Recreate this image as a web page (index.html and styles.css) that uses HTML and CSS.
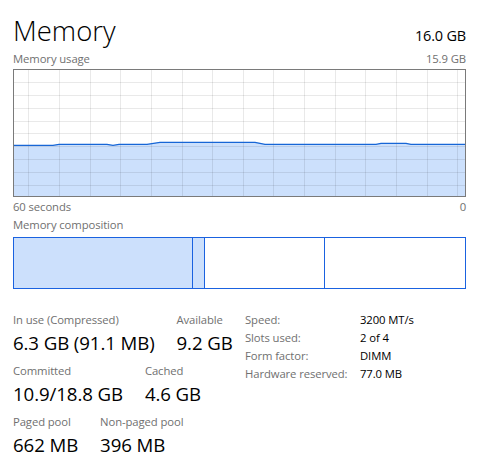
FILE: index.html
```html
<!DOCTYPE html>
<html lang="en">
<head>
  <meta charset="UTF-8" />
  <title>Memory</title>
  <link rel="stylesheet" href="styles.css">
</head>
<body>

  <div class="panel">
    <div class="title-row">
      <h1>Memory</h1>
      <span class="total">16.0 GB</span>
    </div>

    <div class="caption-row">
      <span>Memory usage</span>
      <span>15.9 GB</span>
    </div>

    <svg class="usage-chart" width="453" height="128" viewBox="0 0 453 128">
      <polygon class="usage-fill" points="0,76.3 40,76.3 46,75.3 94,75.3 100,76.3 106,75.3 134,75.3 147,73.3 242,73.3 252,75.3 363,75.3 368,74.4 393,74.4 398,75.3 453,75.3 453,128 0,128"/>
      <g class="grid">
        <line x1="0" y1="13.5" x2="453" y2="13.5"/>
        <line x1="0" y1="26.5" x2="453" y2="26.5"/>
        <line x1="0" y1="39.5" x2="453" y2="39.5"/>
        <line x1="0" y1="52.5" x2="453" y2="52.5"/>
        <line x1="0" y1="64.5" x2="453" y2="64.5"/>
        <line x1="0" y1="77.5" x2="453" y2="77.5"/>
        <line x1="0" y1="90.5" x2="453" y2="90.5"/>
        <line x1="0" y1="103.5" x2="453" y2="103.5"/>
        <line x1="0" y1="116.5" x2="453" y2="116.5"/>
        <line x1="15.5" y1="0" x2="15.5" y2="128"/>
        <line x1="46.5" y1="0" x2="46.5" y2="128"/>
        <line x1="77.5" y1="0" x2="77.5" y2="128"/>
        <line x1="107.5" y1="0" x2="107.5" y2="128"/>
        <line x1="138.5" y1="0" x2="138.5" y2="128"/>
        <line x1="169.5" y1="0" x2="169.5" y2="128"/>
        <line x1="199.5" y1="0" x2="199.5" y2="128"/>
        <line x1="230.5" y1="0" x2="230.5" y2="128"/>
        <line x1="260.5" y1="0" x2="260.5" y2="128"/>
        <line x1="291.5" y1="0" x2="291.5" y2="128"/>
        <line x1="322.5" y1="0" x2="322.5" y2="128"/>
        <line x1="352.5" y1="0" x2="352.5" y2="128"/>
        <line x1="383.5" y1="0" x2="383.5" y2="128"/>
        <line x1="414.5" y1="0" x2="414.5" y2="128"/>
        <line x1="444.5" y1="0" x2="444.5" y2="128"/>
      </g>
      <polyline class="usage-line" points="0,76.3 40,76.3 46,75.3 94,75.3 100,76.3 106,75.3 134,75.3 147,73.3 242,73.3 252,75.3 363,75.3 368,74.4 393,74.4 398,75.3 453,75.3"/>
      <rect class="chart-frame" x="0.5" y="0.5" width="452" height="127"/>
    </svg>

    <div class="caption-row axis">
      <span>60 seconds</span>
      <span>0</span>
    </div>

    <div class="caption-row composition-title">
      <span>Memory composition</span>
    </div>

    <div class="composition">
      <div class="segment in-use"></div>
      <div class="segment modified"></div>
      <div class="segment standby"></div>
      <div class="segment free"></div>
    </div>

    <div class="stats">
      <div class="stats-main">
        <div class="stat-row">
          <div class="stat">
            <div class="stat-label">In use (Compressed)</div>
            <div class="stat-value">6.3 GB (91.1 MB)</div>
          </div>
          <div class="stat">
            <div class="stat-label">Available</div>
            <div class="stat-value">9.2 GB</div>
          </div>
        </div>
        <div class="stat-row">
          <div class="stat">
            <div class="stat-label">Committed</div>
            <div class="stat-value">10.9/18.8 GB</div>
          </div>
          <div class="stat">
            <div class="stat-label">Cached</div>
            <div class="stat-value">4.6 GB</div>
          </div>
        </div>
        <div class="stat-row">
          <div class="stat">
            <div class="stat-label">Paged pool</div>
            <div class="stat-value">662 MB</div>
          </div>
          <div class="stat">
            <div class="stat-label">Non-paged pool</div>
            <div class="stat-value">396 MB</div>
          </div>
        </div>
      </div>

      <dl class="details">
        <dt>Speed:</dt><dd>3200 MT/s</dd>
        <dt>Slots used:</dt><dd>2 of 4</dd>
        <dt>Form factor:</dt><dd>DIMM</dd>
        <dt>Hardware reserved:</dt><dd>77.0 MB</dd>
      </dl>
    </div>
  </div>

</body>
</html>
```

FILE: styles.css
```css
body {
  font-family: 'Open Sans', 'Noto Sans', sans-serif;
  background-color: white;
  color: #000;
  margin: 0;
  padding: 0;
}

.panel {
  width: 453px;
  padding: 0 12px 0 13px;
}

.title-row {
  display: flex;
  justify-content: space-between;
  align-items: baseline;
  margin-top: 11px;
}

.title-row h1 {
  margin: 0;
  font-size: 27.5px;
  font-weight: 300;
  line-height: 40px;
}

.total {
  font-size: 14.5px;
  letter-spacing: -0.2px;
}

.caption-row {
  display: flex;
  justify-content: space-between;
  font-size: 11.3px;
  letter-spacing: -0.1px;
  line-height: 16px;
  color: #707070;
}

.caption-row:first-of-type {
  margin-top: 1px;
}

.usage-chart {
  display: block;
  margin-top: 2px;
}

.usage-fill {
  fill: #cce0fc;
}

.grid line {
  stroke: rgba(0, 0, 0, 0.085);
  stroke-width: 1;
}

.usage-line {
  fill: none;
  stroke: #1766d6;
  stroke-width: 1.3;
}

.chart-frame {
  fill: none;
  stroke: #7a7a7a;
  stroke-width: 1;
}

.axis {
  margin-top: 2px;
}

.composition-title {
  margin-top: 2px;
}

.composition {
  display: flex;
  height: 50px;
  margin-top: 4px;
  border: 1px solid #1a62e0;
}

.segment {
  border-right: 1px solid #1a62e0;
}

.segment.in-use {
  width: 178px;
  background-color: #cce0fc;
}

.segment.modified {
  width: 11px;
  background-color: #cce0fc;
}

.segment.standby {
  width: 119px;
}

.segment.free {
  flex: 1;
  border-right: none;
}

.stats {
  display: flex;
  align-items: flex-start;
  margin-top: 23px;
}

.stats-main {
  width: 232px;
}

.stat-row {
  display: flex;
  gap: 22px;
  margin-bottom: 8px;
}

.stat-label {
  font-size: 11.3px;
  letter-spacing: -0.1px;
  line-height: 16px;
  color: #707070;
}

.stat-value {
  font-size: 18.67px;
  letter-spacing: -0.1px;
  line-height: 24px;
  margin-top: 3px;
}

.details {
  display: grid;
  grid-template-columns: 115px auto;
  margin: -1px 0 0 0;
  font-size: 11.3px;
  letter-spacing: -0.1px;
  line-height: 18px;
}

.details dt {
  color: #707070;
}

.details dd {
  margin: 0;
}
```
